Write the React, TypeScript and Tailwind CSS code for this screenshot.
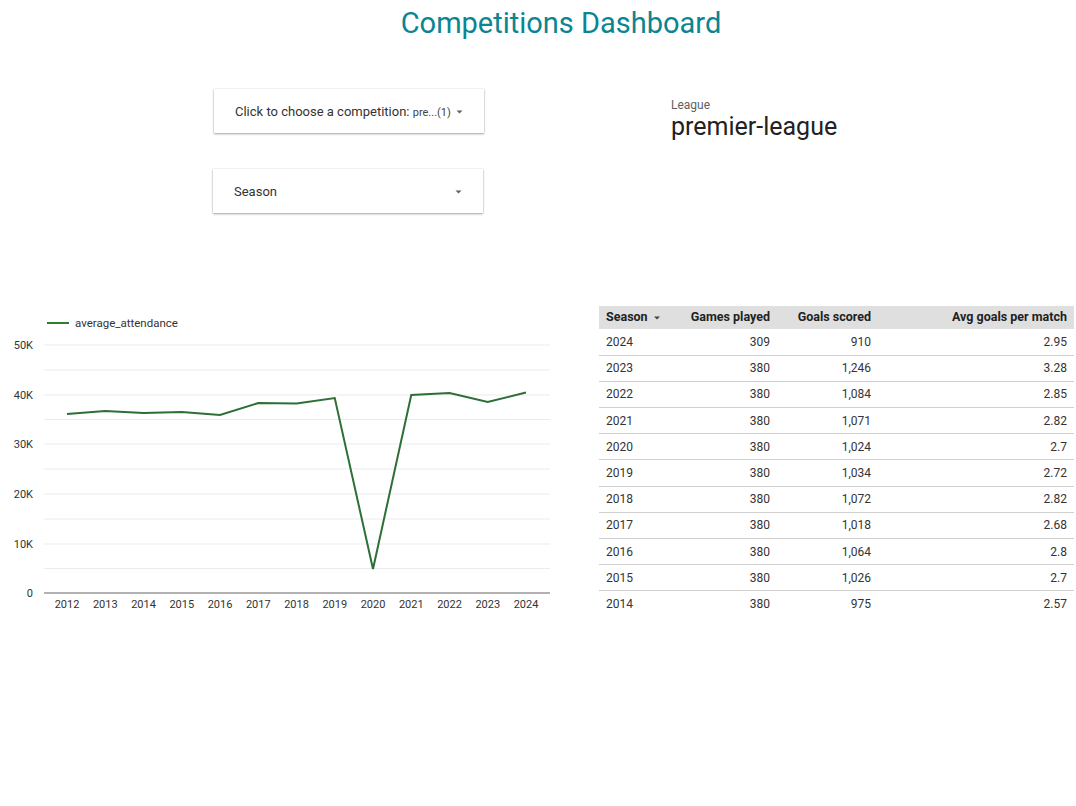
const font = { fontFamily: "Roboto, 'Liberation Sans', sans-serif" };

const years = [2012, 2013, 2014, 2015, 2016, 2017, 2018, 2019, 2020, 2021, 2022, 2023, 2024];
// y positions of the line in chart coordinates (px)
const pointsY = [414, 411, 413, 412, 415, 403, 403.5, 398, 569, 395, 393, 402, 392.5];

const rows = [
  ["2024", "309", "910", "2.95"],
  ["2023", "380", "1,246", "3.28"],
  ["2022", "380", "1,084", "2.85"],
  ["2021", "380", "1,071", "2.82"],
  ["2020", "380", "1,024", "2.7"],
  ["2019", "380", "1,034", "2.72"],
  ["2018", "380", "1,072", "2.82"],
  ["2017", "380", "1,018", "2.68"],
  ["2016", "380", "1,064", "2.8"],
  ["2015", "380", "1,026", "2.7"],
  ["2014", "380", "975", "2.57"],
];

function Caret() {
  return (
    <svg width="7" height="4" viewBox="0 0 7 4" className="shrink-0">
      <path d="M0.5 0.5 L6.5 0.5 L3.5 3.5 Z" fill="#616161" />
    </svg>
  );
}

function Dropdown({ children }: { children: React.ReactNode }) {
  return (
    <div className="w-[270px] h-[44px] bg-white flex items-center justify-between pl-[21px] pr-[21px] pt-[2px] shadow-[0_1px_2px_rgba(0,0,0,0.35),0_0_1px_rgba(0,0,0,0.2)]">
      <div className="text-[13px] text-[#333] whitespace-nowrap">{children}</div>
      <Caret />
    </div>
  );
}

function Chart() {
  const x0 = 67;
  const step = (526 - 67) / 12;
  const top = 310;
  const grid = [345, 370, 395, 419.5, 444, 469, 494, 519, 544, 568.5];
  const labels: [string, number][] = [
    ["50K", 345],
    ["40K", 395],
    ["30K", 444],
    ["20K", 494],
    ["10K", 544],
    ["0", 593],
  ];
  const pts = pointsY.map((y, i) => `${x0 + i * step},${y - top}`).join(" ");
  return (
    <svg width="560" height="310" className="block" style={font}>
      <line x1="47" y1={323 - top} x2="69" y2={323 - top} stroke="#2e7d32" strokeWidth="2" />
      <text x="75" y={327 - top} fontSize="11.5" fill="#333">average_attendance</text>
      {grid.map((y) => (
        <line key={y} x1="44" x2="550" y1={y - top} y2={y - top} stroke="#ebebeb" strokeWidth="1" />
      ))}
      <line x1="44" x2="550" y1={593 - top} y2={593 - top} stroke="#666" strokeWidth="1" />
      {labels.map(([t, y]) => (
        <text key={t} x="33" y={y - top + 4} fontSize="11" fill="#333" textAnchor="end">{t}</text>
      ))}
      {years.map((yr, i) => (
        <text key={yr} x={x0 + i * step} y={608 - top} fontSize="11" fill="#333" textAnchor="middle">{yr}</text>
      ))}
      <polyline points={pts} fill="none" stroke="#2e6f36" strokeWidth="2" strokeLinejoin="miter" />
    </svg>
  );
}

function Table() {
  return (
    <table className="w-[475px] border-collapse text-[12px] text-[#333]" style={font}>
      <colgroup>
        <col className="w-[80px]" />
        <col className="w-[98px]" />
        <col className="w-[101px]" />
        <col className="w-[196px]" />
      </colgroup>
      <thead>
        <tr className="bg-[#dfdfdf] h-[23px] text-[#222] text-[12.5px]">
          <th className="text-left font-bold pl-[7px]">
            <span className="inline-flex items-center gap-[6px]">
              Season
              <svg width="6" height="4" viewBox="0 0 6 4"><path d="M0 0.5 L6 0.5 L3 3.5 Z" fill="#444" /></svg>
            </span>
          </th>
          <th className="text-right font-bold pr-[7px]">Games played</th>
          <th className="text-right font-bold pr-[7px]">Goals scored</th>
          <th className="text-right font-bold pr-[7px]">Avg goals per match</th>
        </tr>
      </thead>
      <tbody>
        {rows.map((r, i) => (
          <tr key={r[0]} className={`h-[26.2px] ${i < rows.length - 1 ? "border-b border-[#d0d0d0]" : ""}`}>
            <td className="text-left pl-[7px]">{r[0]}</td>
            <td className="text-right pr-[7px]">{r[1]}</td>
            <td className="text-right pr-[7px]">{r[2]}</td>
            <td className="text-right pr-[7px]">{r[3]}</td>
          </tr>
        ))}
      </tbody>
    </table>
  );
}

export default function App() {
  return (
    <div className="w-[1076px] h-[806px] bg-white overflow-hidden" style={font}>
      <h1 className="h-[46px] flex items-center justify-center text-[29px] text-[#0b8591] font-normal pl-[46px] pt-[1px]">
        Competitions Dashboard
      </h1>
      <div className="flex h-[250px]">
        <div className="w-[671px] flex flex-col">
          <div className="ml-[214px] mt-[43px]">
            <Dropdown>
              Click to choose a competition: <span className="text-[11px] text-[#444]">pre...(1)</span>
            </Dropdown>
          </div>
          <div className="ml-[213px] mt-[36px]">
            <Dropdown>Season</Dropdown>
          </div>
        </div>
        <div className="pt-[52px] flex flex-col">
          <div className="text-[12px] text-[#5f5f5f] leading-[14px]">League</div>
          <div className="text-[25px] text-[#222] leading-[29px]">premier-league</div>
        </div>
      </div>
      <div className="flex">
        <div className="w-[599px] mt-[14px]">
          <Chart />
        </div>
        <div className="mt-[10px]">
          <Table />
        </div>
      </div>
    </div>
  );
}
